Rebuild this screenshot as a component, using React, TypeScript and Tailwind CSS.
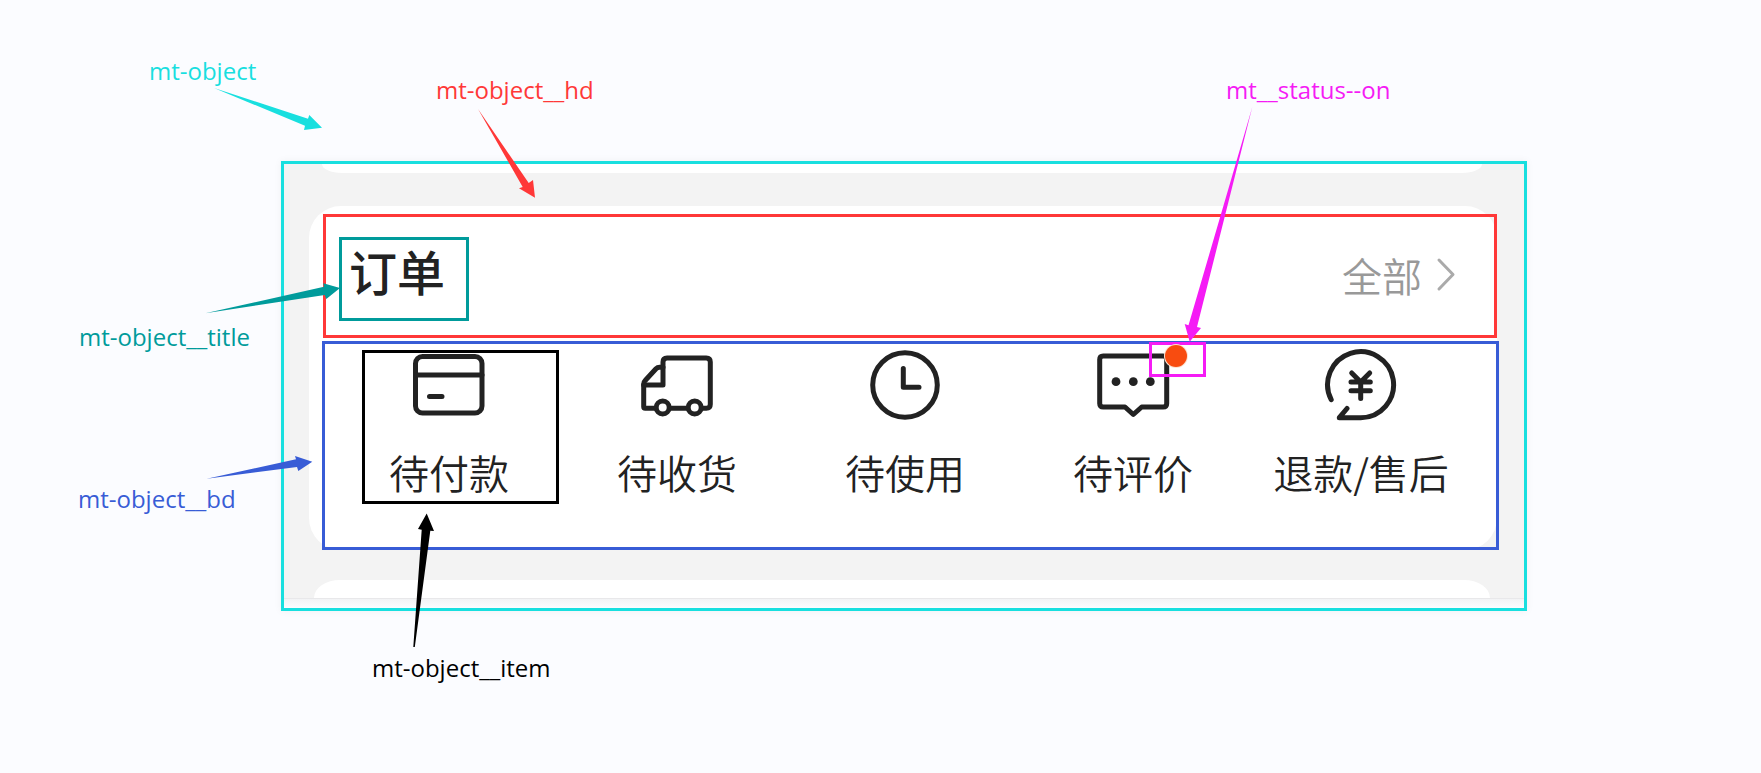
import type { ReactNode } from "react";

type CalloutProps = {
  label: string;
  points: string;
  colorClass: string;
  labelClass: string;
};

function Callout({ label, points, colorClass, labelClass }: CalloutProps) {
  return (
    <div className={`pointer-events-none absolute top-0 left-0 z-10 ${colorClass}`}>
      <svg className="absolute top-0 left-0 h-px w-px overflow-visible" fill="currentColor" aria-hidden="true">
        <polygon points={points} />
      </svg>
      <span
        className={`absolute font-['Open_Sans','Noto_Sans',sans-serif] text-[24px] leading-8 font-normal whitespace-nowrap ${labelClass}`}
      >
        {label}
      </span>
    </div>
  );
}

function Icon({ children }: { children: ReactNode }) {
  return (
    <svg
      viewBox="0 0 74 74"
      className="block h-[74px] w-[74px]"
      fill="none"
      stroke="currentColor"
      strokeWidth="5"
      strokeLinecap="round"
      strokeLinejoin="round"
      aria-hidden="true"
    >
      {children}
    </svg>
  );
}

const CardIcon = () => (
  <Icon>
    <rect x="3.5" y="8.5" width="66.5" height="56.5" rx="7" />
    <path d="M3.5 27H70M17.5 48.5H30" />
  </Icon>
);

const TruckIcon = () => (
  <Icon>
    <path d="M3.7 37H23V14Q23 10 27 10H66.3Q70.3 10 70.3 14V56.3Q70.3 60.3 66.3 60.3H62" />
    <path d="M23 19.3H19.5Q17.5 19.3 16 20.8L5.2 32.5Q3.7 34 3.7 36V58.8Q3.7 60.3 5.2 60.3H15M30.7 60.3H46.7" />
    <circle cx="22.7" cy="59.5" r="6.5" />
    <circle cx="54.7" cy="59.5" r="6.5" />
  </Icon>
);

const ClockIcon = () => (
  <Icon>
    <circle cx="37" cy="37" r="32.3" />
    <path d="M35.3 20.5V39.3H51" />
  </Icon>
);

const CommentIcon = () => (
  <Icon>
    <path d="M7.2 8H67.2Q70.7 8 70.7 11.5V55.5Q70.7 59 67.2 59H45.7L37.3 66.5L29 59H7.2Q3.7 59 3.7 55.5V11.5Q3.7 8 7.2 8Z" />
    <g fill="currentColor" stroke="none">
      <circle cx="20" cy="33.7" r="4.4" />
      <circle cx="37.3" cy="33.7" r="4.4" />
      <circle cx="54.3" cy="33.7" r="4.4" />
    </g>
  </Icon>
);

const RefundIcon = () => (
  <Icon>
    <path d="M7.2 51.7A33 33 0 1 1 36.7 69.7H15.3L23 60.5" />
    <path d="M27.7 25L36.7 34L45.7 25M36.7 34V50.5M27 34H46.3M27 42.7H46.3" />
  </Icon>
);

const items = [
  { label: "待付款", icon: <CardIcon />, framed: true },
  { label: "待收货", icon: <TruckIcon /> },
  { label: "待使用", icon: <ClockIcon /> },
  { label: "待评价", icon: <CommentIcon />, status: true },
  { label: "退款/售后", icon: <RefundIcon /> },
];

function Status() {
  return (
    <span className="absolute -top-[6px] left-[53px] block h-[35px] w-[57px] border-3 border-[#f51bf5] pl-[13px]">
      <span className="block h-[22px] w-[22px] rounded-full bg-[#f84c10] ring-1 ring-[#fbe3d2]" />
      <Callout
        label="mt__status--on"
        colorClass="text-[#f51bf5]"
        labelClass="left-[74px] -top-[271px]"
        points="100.3,-238 36.5,-19.7 32.7,-21 37.7,-3.3 49,-17 45,-18"
      />
    </span>
  );
}

export default function App() {
  return (
    <main className="min-h-screen bg-[#fbfcff] pt-[161px] pr-[234px] pb-[162px] pl-[281px] font-['Noto_Sans_CJK_SC',sans-serif] text-[#222]">
      <section className="relative border-3 border-[#18dfdf] shadow-[0_0_8px_rgba(0,0,0,0.05)]">
        <div className="border-b border-[#e8e8ea] bg-[#f3f3f3]">
          <div className="mr-[42px] ml-[38px] h-[9px] rounded-b-[20px_9px] bg-white" />
          <div className="mt-[33px] mr-[27px] ml-[25px] rounded-[32px] bg-white pt-2 pl-[14px]">
            <header className="flex items-start justify-between border-3 border-[#ff3838] pt-5 pr-[36px] pb-[14px] pl-[13px]">
              <h1 className="h-[84px] w-[130px] border-3 border-[#009b9b] pl-[7px] text-[48px] leading-[60px] font-medium whitespace-nowrap">
                订单
              </h1>
              <a href="#all" className="flex items-center gap-3 text-[40px] leading-[76px] font-[350] text-[#999]">
                全部
                <svg
                  viewBox="0 0 24 36"
                  className="h-9 w-6"
                  fill="none"
                  stroke="#aaa"
                  strokeWidth="3"
                  strokeLinecap="round"
                  strokeLinejoin="round"
                  aria-hidden="true"
                >
                  <path d="M5 3L19 17.5L5 32" />
                </svg>
              </a>
            </header>
            <nav className="mt-[3px] -mr-[2px] -mb-[3px] -ml-px grid grid-cols-5 border-3 border-[#385cd6] pr-[21px] pb-[43px] pl-[10px]">
              {items.map((item) => (
                <a
                  key={item.label}
                  href="#orders"
                  className="relative flex flex-col items-center pt-1 pb-[2px] text-[40px] leading-[60px] font-[350] whitespace-nowrap"
                >
                  {item.framed && (
                    <span className="absolute top-[6px] right-1 bottom-0 left-[27px] border-3 border-black" />
                  )}
                  <span className="relative mb-5 block">
                    {item.icon}
                    {item.status && <Status />}
                  </span>
                  {item.label}
                </a>
              ))}
            </nav>
          </div>
          <div className="mt-[33px] mr-[34px] ml-[30px] h-[18px] rounded-t-[26px_18px] bg-white" />
        </div>
        <div className="h-[9px] bg-linear-to-b from-[#f2f3f5] to-[#fbfcff]" />

        <Callout
          label="mt-object"
          colorClass="text-[#18dfdf]"
          labelClass="-left-[135px] -top-[109px]"
          points="-70,-76 24,-45.3 25.3,-49 38,-36.3 20,-34 21,-38.3"
        />
        <Callout
          label="mt-object__hd"
          colorClass="text-[#ff3838]"
          labelClass="left-[152px] -top-[90px]"
          points="194,-55 244.7,19 249,16 251,33.7 235,24.3 238.7,23"
        />
        <Callout
          label="mt-object__title"
          colorClass="text-[#009b9b]"
          labelClass="-left-[205px] top-[157px]"
          points="-78.7,149.3 40,122.7 39.3,119.3 56,124 42.3,135 40.7,131"
        />
        <Callout
          label="mt-object__bd"
          colorClass="text-[#385cd6]"
          labelClass="-left-[206px] top-[319px]"
          points="-77.3,314.7 12,295.3 11,292 28.3,297.7 14.3,307 13,303"
        />
        <Callout
          label="mt-object__item"
          colorClass="text-black"
          labelClass="left-[88px] top-[488px]"
          points="129.3,483 137.7,365.7 134,365 142.7,349.5 150,367 146.3,366.7 130.8,483"
        />
      </section>
    </main>
  );
}
